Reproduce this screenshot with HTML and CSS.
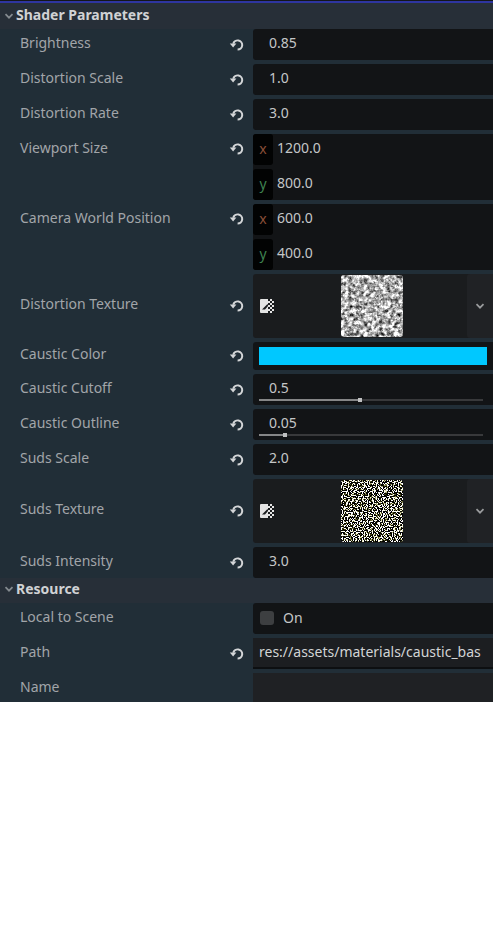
FILE: index.html
```html
<!DOCTYPE html>
<html lang="en">
<head>
    <meta charset="UTF-8">
    <meta name="viewport" content="width=device-width, initial-scale=1.0">
    <title>Shader Parameters</title>
    <link rel="stylesheet" href="styles.css">
</head>
<body>
    <svg class="defs" width="0" height="0">
        <defs>
            <symbol id="revert" viewBox="0 0 16 16">
                <path d="M8.6 12.6a4.6 4.6 0 1 0-4.4-5.9" fill="none" stroke="currentColor" stroke-width="2"/>
                <path d="M0.8 6.4h6.6l-3.3 4z" fill="currentColor"/>
            </symbol>
            <symbol id="chevron" viewBox="0 0 10 10">
                <path d="M1.5 3.2l3.5 3.5 3.5-3.5" fill="none" stroke="currentColor" stroke-width="1.7"/>
            </symbol>
            <symbol id="tex" viewBox="0 0 14 14">
                <path d="M0 1a1 1 0 0 1 1-1h7v2h2v2h-2v2h2v2h-2v2h2v2h-2v2H1a1 1 0 0 1-1-1z" fill="#e4e4e4"/>
                <path d="M10 0h2v2h-2zM12 2h2v2h-2zM10 4h2v2h-2zM12 6h2v2h-2zM10 8h2v2h-2zM12 10h2v2h-2zM10 12h2v2h-2z" fill="#e4e4e4"/>
                <path d="M2 10.5l5.5-5.5 0.5 0.5v1.5l-3 3.5z" fill="#1a1c1e"/>
            </symbol>
            <filter id="cloud" x="0" y="0" width="100%" height="100%" color-interpolation-filters="sRGB">
                <feTurbulence type="fractalNoise" baseFrequency="0.26" numOctaves="4" seed="11"/>
                <feColorMatrix values="1.3 1.3 0 0 -0.62 1.3 1.3 0 0 -0.62 1.3 1.3 0 0 -0.62 0 0 0 0 1"/>
            </filter>
            <filter id="speck" x="0" y="0" width="100%" height="100%" color-interpolation-filters="sRGB">
                <feTurbulence type="fractalNoise" baseFrequency="0.8" numOctaves="1" seed="3"/>
                <feColorMatrix values="16 0 0 0 -7.7 16 0 0 0 -7.7 16 0 0 0 -7.9 0 0 0 0 1"/>
            </filter>
        </defs>
    </svg>

    <div class="panel">
        <div class="section-head">
            <svg class="head-arrow"><use href="#chevron"/></svg>
            <span>Shader Parameters</span>
        </div>
        <div class="rows">
            <div class="row">
                <div class="label">Brightness</div>
                <svg class="revert"><use href="#revert"/></svg>
                <div class="value number">0.85</div>
            </div>
            <div class="row">
                <div class="label">Distortion Scale</div>
                <svg class="revert"><use href="#revert"/></svg>
                <div class="value number">1.0</div>
            </div>
            <div class="row">
                <div class="label">Distortion Rate</div>
                <svg class="revert"><use href="#revert"/></svg>
                <div class="value number">3.0</div>
            </div>
            <div class="row top">
                <div class="label">Viewport Size</div>
                <svg class="revert"><use href="#revert"/></svg>
                <div class="value vector">
                    <div class="axis"><span class="badge x">x</span>1200.0</div>
                    <div class="axis"><span class="badge y">y</span>800.0</div>
                </div>
            </div>
            <div class="row top">
                <div class="label">Camera World Position</div>
                <svg class="revert"><use href="#revert"/></svg>
                <div class="value vector">
                    <div class="axis"><span class="badge x">x</span>600.0</div>
                    <div class="axis"><span class="badge y">y</span>400.0</div>
                </div>
            </div>
            <div class="row">
                <div class="label">Distortion Texture</div>
                <svg class="revert"><use href="#revert"/></svg>
                <div class="value texture">
                    <svg class="tex-icon"><use href="#tex"/></svg>
                    <div class="preview">
                        <svg width="62" height="62"><rect width="62" height="62" filter="url(#cloud)"/></svg>
                    </div>
                    <div class="drop"><svg class="drop-arrow"><use href="#chevron"/></svg></div>
                </div>
            </div>
            <div class="row">
                <div class="label">Caustic Color</div>
                <svg class="revert"><use href="#revert"/></svg>
                <div class="value color"><div class="swatch"></div></div>
            </div>
            <div class="row">
                <div class="label">Caustic Cutoff</div>
                <svg class="revert"><use href="#revert"/></svg>
                <div class="value slider">
                    <div class="slider-text">0.5</div>
                    <div class="track"><div class="fill" style="width: 45%"><i class="grab"></i></div></div>
                </div>
            </div>
            <div class="row">
                <div class="label">Caustic Outline</div>
                <svg class="revert"><use href="#revert"/></svg>
                <div class="value slider">
                    <div class="slider-text">0.05</div>
                    <div class="track"><div class="fill" style="width: 11.6%"><i class="grab"></i></div></div>
                </div>
            </div>
            <div class="row">
                <div class="label">Suds Scale</div>
                <svg class="revert"><use href="#revert"/></svg>
                <div class="value number">2.0</div>
            </div>
            <div class="row">
                <div class="label">Suds Texture</div>
                <svg class="revert"><use href="#revert"/></svg>
                <div class="value texture">
                    <svg class="tex-icon"><use href="#tex"/></svg>
                    <div class="preview">
                        <svg width="62" height="62"><rect width="62" height="62" filter="url(#speck)"/></svg>
                    </div>
                    <div class="drop"><svg class="drop-arrow"><use href="#chevron"/></svg></div>
                </div>
            </div>
            <div class="row">
                <div class="label">Suds Intensity</div>
                <svg class="revert"><use href="#revert"/></svg>
                <div class="value number">3.0</div>
            </div>
        </div>
        <div class="section-head resource">
            <svg class="head-arrow"><use href="#chevron"/></svg>
            <span>Resource</span>
        </div>
        <div class="rows">
            <div class="row">
                <div class="label">Local to Scene</div>
                <div class="no-revert"></div>
                <div class="value check"><span class="box"></span>On</div>
            </div>
            <div class="row">
                <div class="label">Path</div>
                <svg class="revert"><use href="#revert"/></svg>
                <div class="value line-edit">res://assets/materials/caustic_bas</div>
            </div>
            <div class="row">
                <div class="label">Name</div>
                <div class="no-revert"></div>
                <div class="value line-edit empty"></div>
            </div>
        </div>
    </div>
</body>
</html>
```

FILE: styles.css
```css
/* General Reset */
* {
    margin: 0;
    padding: 0;
    box-sizing: border-box;
    font-family: 'Noto Sans', sans-serif;
}

body {
    background: #fff;
    width: 493px;
}

.defs {
    position: absolute;
}

.panel {
    height: 702px;
    overflow: hidden;
    background: #212e37;
    border-top: 1px solid #14161a;
    font-size: 14px;
    color: #a1a5a9;
}

.section-head {
    display: flex;
    align-items: center;
    height: 28px;
    padding-bottom: 3px;
    border-top: 2px solid #2e35a0;
    background: #272f38;
    color: #d0d2d4;
    font-weight: 700;
}

.section-head.resource {
    height: 25px;
    padding-bottom: 5px;
    border-top: none;
}

.head-arrow {
    width: 10px;
    height: 10px;
    margin: 2px 2px 0 4px;
    color: #858b90;
}

.rows {
    display: flex;
    flex-direction: column;
    gap: 4px;
}

.row {
    display: flex;
    align-items: center;
}

.row.top {
    align-items: flex-start;
}

.label {
    width: 229px;
    height: 28px;
    padding: 0 0 4px 20px;
    line-height: 24px;
    white-space: nowrap;
}

.row.top .label {
    height: 31px;
    padding-top: 2px;
}

.revert,
.no-revert {
    flex: none;
    width: 16px;
    height: 16px;
    margin-right: 8px;
    color: #d4d6d8;
}

.row.top .revert {
    margin-top: 7px;
}

.value {
    flex: 1;
    min-width: 0;
    background: #121416;
    border-radius: 3px 0 0 3px;
    color: #c4c6c7;
}

.number {
    height: 31px;
    padding-left: 16px;
    line-height: 28px;
}

.vector {
    display: flex;
    flex-direction: column;
    gap: 4px;
}

.axis {
    display: flex;
    align-items: flex-start;
    gap: 4px;
    height: 31px;
    line-height: 28px;
}

.badge {
    width: 20px;
    height: 31px;
    border-radius: 3px;
    background: #020303;
    line-height: 29px;
    text-align: center;
}

.badge.x {
    color: #8a4f38;
}

.badge.y {
    color: #3f8250;
}

.texture {
    position: relative;
    display: flex;
    align-items: center;
    justify-content: center;
    height: 64px;
    background: #1a1c1e;
}

.tex-icon {
    position: absolute;
    left: 7px;
    top: 25px;
    width: 14px;
    height: 14px;
}

.preview {
    width: 62px;
    height: 62px;
    margin-right: 2px;
    border-radius: 3px;
    overflow: hidden;
}

.preview svg {
    display: block;
}

.drop {
    position: absolute;
    right: 0;
    top: 0;
    display: flex;
    align-items: center;
    justify-content: center;
    width: 26px;
    height: 64px;
    border-radius: 3px 0 0 3px;
    background: #202225;
}

.drop-arrow {
    width: 10px;
    height: 10px;
    color: #9a9c9e;
}

.color {
    height: 28px;
    padding: 5px 6px;
}

.swatch {
    height: 18px;
    background: #00c8ff;
}

.slider {
    height: 31px;
}

.slider-text {
    height: 25px;
    padding-left: 16px;
    line-height: 28px;
}

.track {
    height: 2px;
    margin: 0 10px 0 6px;
    background: #38393b;
}

.fill {
    position: relative;
    height: 2px;
    background: #858687;
}

.grab {
    position: absolute;
    right: -2px;
    top: -1px;
    width: 4px;
    height: 4px;
    background: #bfc0c1;
}

.check {
    display: flex;
    align-items: center;
    gap: 9px;
    height: 31px;
    padding: 0 0 2px 7px;
}

.box {
    width: 14px;
    height: 14px;
    border-radius: 3px;
    background: #3d3f41;
}

.line-edit {
    height: 31px;
    padding-left: 6px;
    border-radius: 0;
    border-bottom: 2px solid #0d0f11;
    background: #1c1e21;
    color: #d2d4d5;
    line-height: 28px;
    white-space: nowrap;
    overflow: hidden;
}

.line-edit.empty {
    border-bottom: none;
    background: #1f2124;
}
```
